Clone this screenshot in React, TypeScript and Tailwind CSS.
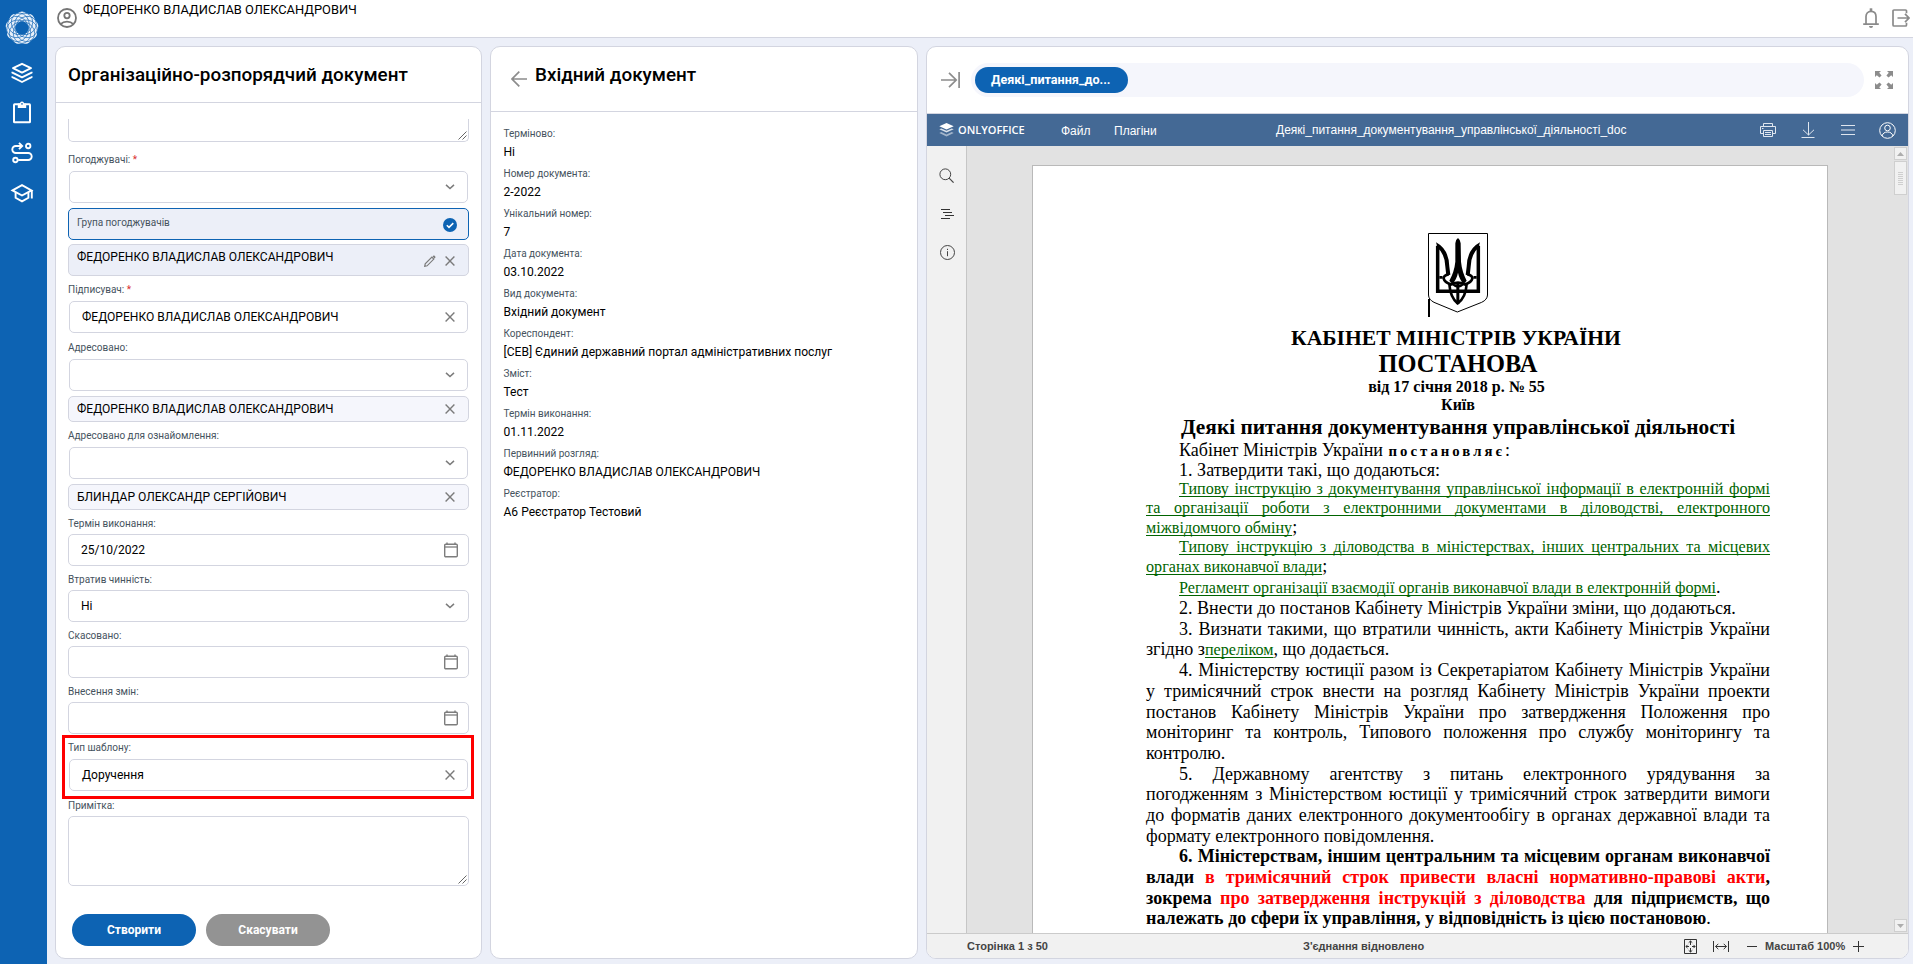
import React from 'react';
import type { ReactNode } from 'react';

/* ---------- icons ---------- */

const CloseIcon = () => (
  <svg className="size-[10px] shrink-0" viewBox="0 0 10 10" fill="none" stroke="#7b7b7b" strokeWidth="1.4">
    <path d="M.6.6l8.8 8.8M9.4.6L.6 9.4" />
  </svg>
);

const ChevronIcon = () => (
  <svg className="h-[6px] w-[10px] shrink-0" viewBox="0 0 10 6" fill="none" stroke="#7b7b7b" strokeWidth="1.5">
    <path d="M1 .9l4 3.7L9 .9" />
  </svg>
);

const CalendarIcon = () => (
  <svg className="h-[16px] w-[14px] shrink-0" viewBox="0 0 14 16" fill="none" stroke="#7d7d7d">
    <rect x=".7" y="2.2" width="12.6" height="12.6" rx="1" strokeWidth="1.4" />
    <path d="M1 5h12" strokeWidth="1.3" />
    <path d="M3 .5v2M11 .5v2" strokeWidth="1.4" />
  </svg>
);

const PencilIcon = () => (
  <svg className="size-[12px] shrink-0" viewBox="0 0 12 12" fill="none" stroke="#7b7b7b" strokeWidth="1.2">
    <path d="M.7 11.300l.5-2.400 6.700-6.700 1.900 1.900-6.700 6.700z" />
    <path d="M8.600 1.500l.9-.9q.4-.3.800 0l1.100 1.100q.3.400 0 .8l-.9.900z" fill="#7b7b7b" stroke="none" />
  </svg>
);

const ResizeGrip = () => (
  <svg className="absolute right-[1px] bottom-[1px] size-[9px]" viewBox="0 0 9 9" fill="none" stroke="#555" strokeWidth=".9">
    <path d="M.5 8.5l8-8M4.5 8.5l4-4" />
  </svg>
);

const Logo = () => {
  const steps = [0, 40, 80, 120, 160, 200, 240, 280, 320];
  return (
    <svg className="size-[34px]" viewBox="-17 -17 34 34" fill="none">
      <circle r="11" stroke="#e8f0f9" strokeWidth="9" />
      {steps.map((a) => (
        <circle key={a} cy="-10.800" r="5.600" fill="#e8f0f9" transform={`rotate(${a})`} />
      ))}
      {steps.map((a) => (
        <ellipse key={a} cy="-5" rx="8.800" ry="10.400" stroke="#1c6cb8" strokeWidth=".7" transform={`rotate(${a + 20})`} />
      ))}
      <circle r="6.500" fill="#0d63b3" />
    </svg>
  );
};

const LayersIcon = () => (
  <svg className="size-[22px]" viewBox="0 0 22 22" fill="none" stroke="#fff" strokeWidth="1.9" strokeLinejoin="round">
    <path d="M11 1.800L2 6.200l9 4.400 9-4.400z" />
    <path d="M1.400 9.700v1L11 15.400l9.600-4.700v-1M1.400 14.200v1L11 20l9.600-4.800v-1" />
  </svg>
);

const ClipboardIcon = () => (
  <svg className="h-[23px] w-[20px]" viewBox="0 0 20 23" fill="none" stroke="#fff" strokeWidth="2">
    <rect x="2" y="3.300" width="16" height="18" rx=".6" />
    <path d="M5.800 2.500h2.200a2 2 0 014 0h2.200V7H5.800z" fill="#fff" stroke="none" />
    <circle cx="10" cy="2.900" r=".8" fill="#0d63b3" stroke="none" />
  </svg>
);

const RouteIcon = () => (
  <svg className="size-[22px]" viewBox="0 0 22 22" fill="none" stroke="#fff" strokeWidth="1.900">
    <path d="M10.500 4H4.800a3.300 3.300 0 000 7h12.400a3.500 3.500 0 010 7H7.200" />
    <path d="M8 .9L11.200 4 8 7.100" />
    <circle cx="17.200" cy="4" r="2.200" />
    <circle cx="4.400" cy="18" r="2.200" />
  </svg>
);

const CapIcon = () => (
  <svg className="h-[20px] w-[24px]" viewBox="0 0 24 20" fill="none" stroke="#fff" strokeWidth="1.900">
    <path d="M2.500 7.400L12 2.200l9.500 5.200L12 12.500z" />
    <path d="M5.600 9.300v5.500L12 18.300l6.400-3.500V9.300M21.800 7.200v8.300" />
  </svg>
);

const AccountIcon = () => (
  <svg className="size-[20px] shrink-0" viewBox="0 0 20 20" fill="none" stroke="#757575" strokeWidth="1.800">
    <circle cx="10" cy="10" r="9" />
    <circle cx="10" cy="7.600" r="2.700" />
    <path d="M3.600 16.200c1.700-1.700 4-2.500 6.400-2.500s4.700.8 6.400 2.500" />
  </svg>
);

const BellIcon = () => (
  <svg className="h-[20px] w-[16px]" viewBox="0 0 16 20" fill="none" stroke="#8a8a8a" strokeWidth="1.700">
    <path d="M3 15.500V8.600C3 5.400 5 3.300 8 3.300s5 2.100 5 5.300v6.900M.2 16.200h15.600" />
    <path d="M8 .3v3" strokeWidth="2.600" />
    <path d="M6 18h4a2 2 0 01-4 0z" fill="#8a8a8a" stroke="none" />
  </svg>
);

const LogoutIcon = () => (
  <svg className="h-[18px] w-[18px]" viewBox="0 0 18 18" fill="none" stroke="#8a8a8a" strokeWidth="1.700">
    <path d="M14.500 4.200V2q0-1-1-1H2Q1 1 1 2v14q0 1 1 1h11.500q1 0 1-1v-2.200" />
    <path d="M5.500 9H17M13 4.900L17 9l-4 4.100" />
  </svg>
);

const Trident = () => (
  <svg className="h-[80px] w-[60px]" viewBox="84 699 180 240" fill="none" stroke="#000">
    <path d="M85.500 700.500H262.500V885Q262 899 245 907L172 936L102 907Q86 899 85.500 885Z" strokeWidth="3" />
    <path d="M113 737V873.500H235V737" strokeWidth="10.500" />
    <path d="M108 727Q147 748 148 800L151 824L139 827L136 800Q134 760 113 744Z" fill="#000" stroke="none" />
    <path d="M240 727Q201 748 200 800L197 824L209 827L212 800Q214 760 235 744Z" fill="#000" stroke="none" />
    <path d="M118 832H127M230 832H221M146 823C124 826 126 845 154 853M202 823C224 826 222 845 194 853" strokeWidth="8" />
    <path d="M174 714Q182 720 182 730L183 785Q186 815 200 842L191 852Q178 838 174 818Q170 838 157 852L148 842Q163 815 166 785V730Q167 718 174 714Z" fill="#000" stroke="none" />
    <path d="M148 852C150 882 160 900 173 910C188 900 198 882 200 852M148 856Q174 840 200 856M159 852Q174 866 189 852" strokeWidth="8" />
    <path d="M173.500 852V912" strokeWidth="9" />
  </svg>
);

/* ---------- left form ---------- */

const Label = ({ children, required }: { children: ReactNode; required?: boolean }) => (
  <div className="h-6 pt-[3px] text-[10.030px] leading-[21px] text-[#46535e]">
    {children}
    {required && <span className="text-[#d9302f]"> *</span>}
  </div>
);

const Field = ({ value, icon, inset }: { value?: string; icon: 'chevron' | 'close' | 'calendar'; inset?: boolean }) => (
  <div
    className={
      inset
        ? 'm-px flex h-8 items-center justify-between rounded-[5px] border border-[#d3d5e0] bg-white pr-[12px] pl-[12px]'
        : 'flex h-8 items-center justify-between rounded-[5px] border border-[#d3d5e0] bg-white pr-[10px] pl-[12px]'
    }
  >
    <span className="text-[12.050px]">{value}</span>
    {icon === 'chevron' && (
      <span className={inset ? 'flex' : 'flex pr-[3px]'}>
        <ChevronIcon />
      </span>
    )}
    {icon === 'close' && <CloseIcon />}
    {icon === 'calendar' && <CalendarIcon />}
  </div>
);

const Chip = ({ name }: { name: string }) => (
  <div className="mt-1 flex h-[26px] items-center justify-between rounded-[5px] border border-[#d3d5e0] bg-[#f5f6fc] pr-[13px] pl-[8px] text-[12.050px]">
    {name}
    <CloseIcon />
  </div>
);

const FormPanel = () => (
  <section className="flex w-[427px] shrink-0 flex-col overflow-hidden rounded-[10px] border border-[#d3d5e0] bg-white">
    <h1 className="h-[56px] shrink-0 border-b border-[#d3d5e0] pl-[12px] text-[18.860px] leading-[56px] font-medium">
      Організаційно-розпорядчий документ
    </h1>
    <div className="flex flex-col px-[12px] pt-[16px]">
      <div className="relative mb-1 h-[23px] rounded-b-[5px] border border-t-0 border-[#d3d5e0]">
        <ResizeGrip />
      </div>
      <Label required>Погоджувачі:</Label>
      <Field icon="chevron" inset />
      <div className="mt-1 flex h-8 items-center justify-between rounded-[5px] border border-[#0d63b3] bg-[#eceff8] pr-[11px] pl-[8px]">
        <span className="pb-[3px] text-[10.030px] text-[#46535e]">Група погоджувачів</span>
        <svg className="mt-[2px] size-[14px]" viewBox="0 0 14 14">
          <circle cx="7" cy="7" r="7" fill="#0d63b3" />
          <path d="M3.800 7.200l2.200 2.200 4.300-4.300" fill="none" stroke="#fff" strokeWidth="1.500" />
        </svg>
      </div>
      <div className="mt-1 flex h-8 justify-between rounded-[5px] border border-[#d3d5e0] bg-[#eceff8] pr-[13px] pl-[8px]">
        <span className="text-[12.050px] leading-[24px]">ФЕДОРЕНКО ВЛАДИСЛАВ ОЛЕКСАНДРОВИЧ</span>
        <span className="flex items-center gap-[9px] pt-[2px]">
          <PencilIcon />
          <CloseIcon />
        </span>
      </div>
      <Label required>Підписувач:</Label>
      <Field value="ФЕДОРЕНКО ВЛАДИСЛАВ ОЛЕКСАНДРОВИЧ" icon="close" inset />
      <Label>Адресовано:</Label>
      <Field icon="chevron" inset />
      <Chip name="ФЕДОРЕНКО ВЛАДИСЛАВ ОЛЕКСАНДРОВИЧ" />
      <Label>Адресовано для ознайомлення:</Label>
      <Field icon="chevron" inset />
      <Chip name="БЛИНДАР ОЛЕКСАНДР СЕРГІЙОВИЧ" />
      <Label>Термін виконання:</Label>
      <Field value="25/10/2022" icon="calendar" />
      <Label>Втратив чинність:</Label>
      <Field value="Ні" icon="chevron" />
      <Label>Скасовано:</Label>
      <Field icon="calendar" />
      <Label>Внесення змін:</Label>
      <Field icon="calendar" />
      <div className="relative">
        <Label>Тип шаблону:</Label>
        <Field value="Доручення" icon="close" inset />
        <div className="absolute top-px -right-[5px] -bottom-[7px] -left-[6px] border-[3px] border-[#fe0000]" />
      </div>
      <Label>Примітка:</Label>
      <div className="relative h-[70px] rounded-[5px] border border-[#d3d5e0]">
        <ResizeGrip />
      </div>
      <div className="mt-[28px] flex gap-[10px] pl-[4px] text-[12px] font-bold text-white">
        <button className="h-8 w-[124px] rounded-full bg-[#0d63b3]">Створити</button>
        <button className="h-8 w-[124px] rounded-full bg-[#939393]">Скасувати</button>
      </div>
    </div>
  </section>
);

/* ---------- middle panel ---------- */

const details: [string, string][] = [
  ['Терміново:', 'Ні'],
  ['Номер документа:', '2-2022'],
  ['Унікальний номер:', '7'],
  ['Дата документа:', '03.10.2022'],
  ['Вид документа:', 'Вхідний документ'],
  ['Кореспондент:', '[СЕВ] Єдиний державний портал адміністративних послуг'],
  ['Зміст:', 'Тест'],
  ['Термін виконання:', '01.11.2022'],
  ['Первинний розгляд:', 'ФЕДОРЕНКО ВЛАДИСЛАВ ОЛЕКСАНДРОВИЧ'],
  ['Реєстратор:', 'А6 Реєстратор Тестовий'],
];

const DetailsPanel = () => (
  <section className="w-[428px] shrink-0 rounded-[10px] border border-[#d3d5e0] bg-white">
    <header className="flex h-[65px] border-b border-[#d3d5e0] pl-[20px]">
      <svg className="mt-[24px] h-[16px] w-[16px]" viewBox="0 0 16 16" fill="none" stroke="#8c8c8c" strokeWidth="1.700">
        <path d="M16 8H1.200M8.300.7L1 8l7.300 7.300" />
      </svg>
      <h2 className="pl-[8px] text-[18.860px] leading-[56px] font-medium">Вхідний документ</h2>
    </header>
    <dl className="pt-[12px] pl-[12.500px]">
      {details.map(([k, v]) => (
        <div key={k} className="mb-[2px]">
          <dt className="text-[10.030px] leading-[19px] text-[#46535e]">{k}</dt>
          <dd className="text-[12.070px] leading-[19px]">{v}</dd>
        </div>
      ))}
    </dl>
  </section>
);

/* ---------- document ---------- */

const J = '[text-align-last:justify]';

const Link = ({ children }: { children: ReactNode }) => (
  <span className="text-[16.150px] leading-none text-[#006400] underline decoration-1 underline-offset-[2px] [text-decoration-skip-ink:none]">
    {children}
  </span>
);

const Page = () => (
  <article className="ml-[65px] mt-[19px] w-[796px] shrink-0 self-start border border-b-0 border-[#b9b9b9] bg-white pr-[57px] pl-[113px] font-['Liberation_Serif',serif] text-[18.030px] whitespace-nowrap text-black">
    <div className="relative flex h-[159px] justify-start pt-[67px] pl-[282px]">
      <Trident />
      <span className="absolute top-[133px] left-[282px] h-[18px] w-[2px] bg-black" />
    </div>
    <div className="-ml-[4px] text-center text-[21.600px] leading-[26px] font-bold">КАБІНЕТ МІНІСТРІВ УКРАЇНИ</div>
    <div className="text-center text-[24.400px] leading-[26px] font-bold">ПОСТАНОВА</div>
    <div className="-ml-[3px] text-center text-[16px] leading-[19px] font-bold">від 17 січня 2018 р. № 55</div>
    <div className="text-center text-[16px] leading-[17px] font-bold">Київ</div>
    <div className="mt-px text-center text-[21.370px] leading-[27px] font-bold">Деякі питання документування управлінської діяльності</div>
    <div className="pl-[33px] leading-[18px]">
      Кабінет Міністрів України <span className="ml-px text-[14.800px] leading-none font-bold tracking-[3px]">постановляє</span>:
    </div>
    <div className="mt-px pl-[33px] text-[18.080px] leading-[21px]">1. Затвердити такі, що додаються:</div>
    <div className={`${J} pl-[33px] text-[16.100px] leading-[16px]`}>
      <Link>Типову інструкцію з документування управлінської інформації в електронній формі</Link>
    </div>
    <div className={`${J} mt-px text-[16.100px] leading-[20px]`}>
      <Link>та організації роботи з електронними документами в діловодстві, електронного</Link>
    </div>
    <div className="leading-[18px]">
      <Link>міжвідомчого обміну</Link>;
    </div>
    <div className={`${J} pl-[33px] text-[16.100px] leading-[22px]`}>
      <Link>Типову інструкцію з діловодства в міністерствах, інших центральних та місцевих</Link>
    </div>
    <div className="leading-[17px]">
      <Link>органах виконавчої влади</Link>;
    </div>
    <div className="pl-[33px] leading-[24px]">
      <Link>Регламент організації взаємодії органів виконавчої влади в електронній формі</Link>.
    </div>
    <div className="-mt-[1.400px] leading-[20.690px]">
      <div className="pl-[33px]">2. Внести до постанов Кабінету Міністрів України зміни, що додаються.</div>
      <div className={`${J} pl-[33px]`}>3. Визнати такими, що втратили чинність, акти Кабінету Міністрів України</div>
      <div>
        згідно з<Link>переліком</Link>, що додається.
      </div>
      <div className={`${J} pl-[33px]`}>4. Міністерству юстиції разом із Секретаріатом Кабінету Міністрів України</div>
      <div className={J}>у тримісячний строк внести на розгляд Кабінету Міністрів України проекти</div>
      <div className={J}>постанов Кабінету Міністрів України про затвердження Положення про</div>
      <div className={J}>моніторинг та контроль, Типового положення про службу моніторингу та</div>
      <div>контролю.</div>
      <div className={`${J} pl-[33px]`}>5. Державному агентству з питань електронного урядування за</div>
      <div className={J}>погодженням з Міністерством юстиції у тримісячний строк затвердити вимоги</div>
      <div className={J}>до форматів даних електронного документообігу в органах державної влади та</div>
      <div>формату електронного повідомлення.</div>
      <div className="font-bold">
        <div className={`${J} pl-[33px]`}>6. Міністерствам, іншим центральним та місцевим органам виконавчої</div>
        <div className={J}>
          влади <span className="text-[#fe0000]">в тримісячний строк привести власні нормативно-правові акти</span>,
        </div>
        <div className={J}>
          зокрема <span className="text-[#fe0000]">про затвердження інструкцій з діловодства</span> для підприємств, що
        </div>
        <div>
          належать до сфери їх управління, у відповідність із цією постановою<span className="font-normal">.</span>
        </div>
      </div>
    </div>
    <div className="h-[30px]" />
  </article>
);

const ViewerPanel = () => (
  <section className="flex w-[983px] shrink-0 flex-col overflow-hidden rounded-[10px] border border-[#d3d5e0] bg-white">
    <header className="flex h-[67px] shrink-0 items-center border-b border-[#d3d5e0] pl-[14px]">
      <svg className="h-[16px] w-[19px]" viewBox="0 0 19 16" fill="none" stroke="#8c8c8c" strokeWidth="1.700">
        <path d="M0 8h15M8 .8L15.200 8 8 15.200M18.100 0v16" />
      </svg>
      <div className="ml-[11px] flex h-[34px] w-[893px] items-center rounded-full bg-[#f5f6fc] px-1">
        <div className="h-[26px] w-[153px] rounded-full bg-[#0d63b3] pl-[16px] text-[12.600px] leading-[26px] font-bold text-white">
          Деякі_питання_до...
        </div>
      </div>
      <svg className="ml-[11px] size-[18px]" viewBox="0 0 18 18" fill="#8c8c8c">
        {[0, 90, 180, 270].map((a) => (
          <path key={a} d="M0 0h6L4.200 1.800 6.600 4.500 4.500 6.600 1.800 4.200 0 6z" transform={`rotate(${a} 9 9)`} />
        ))}
      </svg>
    </header>

    <div className="flex h-[32px] shrink-0 items-center bg-[#446995] font-['Liberation_Sans',sans-serif] text-[12px] text-white">
      <svg className="ml-[12px] h-[14px] w-[15px]" viewBox="0 0 15 14" fill="#fff">
        <path d="M7.500 6.500L.3 3.300 7.500 0l7.200 3.300z" />
        <path d="M.3 6.200L2.300 5.400l5.200 2.300 5.200-2.300 2 .8-7.200 3.400z" opacity=".8" />
        <path d="M.3 10L2.300 9.100l5.200 2.300 5.200-2.300 2 .9-7.200 3.500z" opacity=".5" />
      </svg>
      <span className="ml-[4px] w-[103px] font-['Open_Sans',sans-serif] text-[11px] font-semibold">ONLYOFFICE</span>
      <span className="w-[53px] pt-[2px]">Файл</span>
      <span className="w-[162px] pt-[2px]">Плагіни</span>
      <span className="w-[484px]">Деякі_питання_документування_управлінської_діяльності_doc</span>
      <svg className="h-[16px] w-[16px]" viewBox="0 0 16 16" fill="none" stroke="#dfe6ef">
        <path d="M3.500 4.500v-3h9v3M3.500 11.500h-3v-7h15v7h-3M3.500 8.500h9v6h-9zM5 10.500h6M5 12.500h6M2 6.500h1.500" />
      </svg>
      <svg className="ml-[25px] h-[16px] w-[14px]" viewBox="0 0 14 16" fill="none" stroke="#dfe6ef">
        <path d="M7.500 0v13M2 7.800L7.500 13 13 7.800M.5 15.500h13" />
      </svg>
      <svg className="ml-[26px] h-[10px] w-[14px]" viewBox="0 0 14 10" fill="none" stroke="#dfe6ef">
        <path d="M0 .5h14M0 5h14M0 9.500h14" />
      </svg>
      <svg className="ml-[24px] size-[17px]" viewBox="0 0 17 17" fill="none" stroke="#fff">
        <circle cx="8.500" cy="8.500" r="7.800" />
        <circle cx="8.500" cy="6" r="2.800" />
        <path d="M3 14c.8-2.800 2.700-4 5.500-4s4.700 1.200 5.500 4" />
      </svg>
    </div>

    <div className="flex min-h-0 flex-1 bg-[#e2e2e2]">
      <div className="flex w-[40px] shrink-0 flex-col border-r border-[#c6c6c6] bg-[#f1f1f1] pl-[12px] text-[#333]">
        <svg className="mt-[22px] size-[15px]" viewBox="0 0 15 15" fill="none" stroke="#444">
          <circle cx="6.300" cy="6.300" r="5.400" />
          <path d="M10.100 10.100l4.500 4.500" strokeWidth="1.200" />
        </svg>
        <svg className="mt-[26px] ml-[2px] h-[11px] w-[13px]" viewBox="0 0 13 11" fill="none" stroke="#333">
          <path d="M0 .5h9M2 3.500h9M4 6.500h9M0 9.500h9" />
        </svg>
        <svg className="mt-[25px] ml-px size-[15px]" viewBox="0 0 15 15" fill="none" stroke="#444">
          <circle cx="7.500" cy="7.500" r="7" />
          <path d="M7.500 6.200v5M7.500 3.800v1.200" />
        </svg>
      </div>
      <div className="flex min-w-0 flex-1 overflow-hidden">
        <Page />
      </div>
      <div className="flex w-[14px] shrink-0 flex-col pt-px pr-px pb-px">
        <div className="flex h-[13px] items-center justify-center border border-[#cfcfcf] bg-[#f1f1f1]">
          <svg className="h-[4px] w-[7px]" viewBox="0 0 7 4" fill="#adadad">
            <path d="M0 4L3.500 0 7 4z" />
          </svg>
        </div>
        <div className="mt-px flex h-[34px] flex-col items-center justify-center gap-px border border-[#cfcfcf] bg-[#f1f1f1]">
          {[1, 2, 3, 4, 5, 6, 7].map((n) => (
            <span key={n} className="h-px w-[5px] bg-[#cfcfcf]" />
          ))}
        </div>
        <div className="mt-auto flex h-[13px] items-center justify-center border border-[#cfcfcf] bg-[#f1f1f1]">
          <svg className="h-[4px] w-[7px]" viewBox="0 0 7 4" fill="#adadad">
            <path d="M0 0L3.500 4 7 0z" />
          </svg>
        </div>
      </div>
    </div>

    <footer className="flex h-[25px] shrink-0 items-center border-t border-[#cbcbcb] bg-[#f1f1f1] font-['Liberation_Sans',sans-serif] text-[11px] font-bold text-[#444]">
      <span className="ml-[40px] w-[336px]">Сторінка 1 з 50</span>
      <span className="w-[381px]">З'єднання відновлено</span>
      <svg className="h-[15px] w-[13px]" viewBox="0 0 13 15" fill="none" stroke="#333">
        <path d="M.5.5h12v14H.5zM6.500 2v4M6.500 9v4M2 7.500h3M8 7.500h3M4.700 3.700L6.500 2l1.800 1.700M4.700 11.300L6.500 13l1.800-1.700M3.500 5.900L1.900 7.500l1.600 1.600M9.500 5.900l1.600 1.600-1.600 1.600" />
      </svg>
      <svg className="ml-[16px] h-[11px] w-[16px]" viewBox="0 0 16 11" fill="none" stroke="#333">
        <path d="M.5 0v11M15.500 0v11M2.500 5.500h11M5.300 2.800L2.600 5.500l2.700 2.700M10.700 2.800l2.700 2.700-2.700 2.700" />
      </svg>
      <svg className="ml-[18px] h-[11px] w-[10px]" viewBox="0 0 10 11" fill="none" stroke="#333">
        <path d="M0 5.500h10" />
      </svg>
      <span className="ml-[8px] w-[88px]">Масштаб 100%</span>
      <svg className="size-[11px]" viewBox="0 0 11 11" fill="none" stroke="#333">
        <path d="M0 5.500h11M5.500 0v11" />
      </svg>
    </footer>
  </section>
);

export default function App() {
  return (
    <div className="flex h-[964px] w-[1913px] overflow-hidden bg-[#eceff8] font-[Roboto,sans-serif] text-black">
      <nav className="flex w-[47px] shrink-0 flex-col items-center bg-[#0d63b3] pt-[11px] pr-[3px]">
        <Logo />
        <div className="mt-[17px]"><LayersIcon /></div>
        <div className="mt-[17px]"><ClipboardIcon /></div>
        <div className="mt-[18px]"><RouteIcon /></div>
        <div className="mt-[19px]"><CapIcon /></div>
      </nav>
      <div className="flex min-w-0 flex-1 flex-col">
        <header className="flex h-[38px] shrink-0 border-b border-[#d3d5e0] bg-white">
          <span className="mt-[8px] ml-[10px]"><AccountIcon /></span>
          <span className="ml-[6px] text-[12.870px] leading-[20px]">ФЕДОРЕНКО ВЛАДИСЛАВ ОЛЕКСАНДРОВИЧ</span>
          <span className="mt-[8px] ml-auto"><BellIcon /></span>
          <span className="mt-[9px] mr-[3px] ml-[13px]"><LogoutIcon /></span>
        </header>
        <main className="flex min-h-0 flex-1 gap-[8px] pt-[8px] pb-[5px] pl-[8px]">
          <FormPanel />
          <DetailsPanel />
          <ViewerPanel />
        </main>
      </div>
    </div>
  );
}
